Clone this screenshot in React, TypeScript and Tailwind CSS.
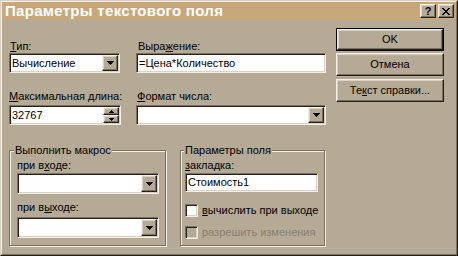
import React from "react";

const RAISED =
  "border border-t-[#f4f0e8] border-l-[#f4f0e8] border-r-[#24211c] border-b-[#24211c] shadow-[inset_-1px_-1px_0_#7b7160,inset_1px_1px_0_#d9d1c2]";
const SUNKEN =
  "border border-t-[#7b7160] border-l-[#7b7160] border-r-[#f4f0e8] border-b-[#f4f0e8] shadow-[inset_1px_1px_0_#24211c,inset_-1px_-1px_0_#d9d1c2]";
const GROUP =
  "relative border border-[#7b7160] shadow-[inset_1px_1px_0_#f4f0e8,1px_1px_0_#f4f0e8]";

function DownArrow() {
  return (
    <svg width="7" height="4" viewBox="0 0 7 4" shapeRendering="crispEdges">
      <rect x="0" y="0" width="7" height="1" fill="#000" />
      <rect x="1" y="1" width="5" height="1" fill="#000" />
      <rect x="2" y="2" width="3" height="1" fill="#000" />
      <rect x="3" y="3" width="1" height="1" fill="#000" />
    </svg>
  );
}

function SmallArrow({ up }: { up?: boolean }) {
  return (
    <svg width="5" height="3" viewBox="0 0 5 3" shapeRendering="crispEdges">
      {up ? (
        <>
          <rect x="2" y="0" width="1" height="1" fill="#000" />
          <rect x="1" y="1" width="3" height="1" fill="#000" />
          <rect x="0" y="2" width="5" height="1" fill="#000" />
        </>
      ) : (
        <>
          <rect x="0" y="0" width="5" height="1" fill="#000" />
          <rect x="1" y="1" width="3" height="1" fill="#000" />
          <rect x="2" y="2" width="1" height="1" fill="#000" />
        </>
      )}
    </svg>
  );
}

function Combo({ className, value }: { className: string; value?: string }) {
  return (
    <div className={`${SUNKEN} bg-white p-[1px] flex ${className}`}>
      <div className="flex-1 flex items-center pl-[1px] whitespace-nowrap overflow-hidden">
        {value}
      </div>
      <div className={`${RAISED} bg-[#b5aa96] w-[16px] flex items-center justify-center`}>
        <DownArrow />
      </div>
    </div>
  );
}

function TextBox({ className, value }: { className: string; value?: string }) {
  return (
    <div className={`${SUNKEN} bg-white flex items-center pl-[2px] whitespace-nowrap ${className}`}>
      {value}
    </div>
  );
}

function Button({
  children,
  isDefault,
  className,
}: {
  children: React.ReactNode;
  isDefault?: boolean;
  className?: string;
}) {
  if (isDefault) {
    return (
      <div className={`border border-black flex ${className ?? ""}`}>
        <div className={`${RAISED} flex-1 flex items-center justify-center`}>{children}</div>
      </div>
    );
  }
  return (
    <div className={`${RAISED} flex items-center justify-center whitespace-nowrap ${className ?? ""}`}>
      {children}
    </div>
  );
}

function CheckBox({ disabled }: { disabled?: boolean }) {
  return (
    <div
      className={`${SUNKEN} w-[13px] h-[13px] shrink-0 ${disabled ? "bg-[#b5aa96]" : "bg-white"}`}
    />
  );
}

export default function App() {
  return (
    <div className="w-[458px] h-[256px] overflow-hidden bg-[#b5aa96] border border-t-[#d9d1c2] border-l-[#d9d1c2] border-r-[#24211c] border-b-[#24211c] font-['Liberation_Sans',Arial,sans-serif] text-[11px] leading-[13px] text-black">
      <div className="h-full flex flex-col border border-t-[#f4f0e8] border-l-[#f4f0e8] border-r-[#7b7160] border-b-[#7b7160]">
        {/* Title bar */}
        <div className="h-[18px] shrink-0 bg-[#c8a77b] flex items-center pl-[3px] pr-[2px]">
          <span className="text-white font-bold text-[15px] leading-[18px] tracking-[0.3px] whitespace-nowrap">
            Параметры текстового поля
          </span>
          <div className="ml-auto flex gap-[2px]">
            <div className={`${RAISED} bg-[#b5aa96] w-[16px] h-[14px] flex items-center justify-center`}>
              <span className="font-bold text-[11px] leading-[11px]">?</span>
            </div>
            <div className={`${RAISED} bg-[#b5aa96] w-[16px] h-[14px] flex items-center justify-center`}>
              <svg width="8" height="7" viewBox="0 0 8 7" shapeRendering="crispEdges">
                <path
                  d="M0 0h2v1h1v1h2v-1h1v-1h2v1h-1v1h-1v1h-1v1h1v1h1v1h1v1h-2v-1h-1v-1h-2v1h-1v1h-2v-1h1v-1h1v-1h1v-1h-1v-1h-1v-1h-1z"
                  fill="#000"
                />
              </svg>
            </div>
          </div>
        </div>

        {/* Body */}
        <div className="flex-1 flex pl-[7px]">
          {/* Left column */}
          <div className="w-[317px] pt-[20px] flex flex-col">
            {/* Row 1 */}
            <div className="flex gap-[16px]">
              <div className="w-[111px] flex flex-col">
                <div className="pl-[1px] whitespace-nowrap">
                  <u>Т</u>ип:
                </div>
                <Combo className="w-[111px] h-[20px]" value="Вычисление" />
              </div>
              <div className="w-[190px] flex flex-col">
                <div className="pl-[2px] whitespace-nowrap">
                  Выра<u>ж</u>ение:
                </div>
                <TextBox className="w-[190px] h-[20px]" value="=Цена*Количество" />
              </div>
            </div>

            {/* Row 2 */}
            <div className="flex gap-[15px] mt-[17px]">
              <div className="w-[112px] flex flex-col">
                <div className="whitespace-nowrap">
                  <u>М</u>аксимальная длина:
                </div>
                <div className={`${SUNKEN} bg-white p-[1px] flex w-[112px] h-[20px] mt-[2px]`}>
                  <div className="flex-1 flex items-center pl-[1px]">32767</div>
                  <div className="w-[16px] flex flex-col">
                    <div className={`${RAISED} bg-[#b5aa96] flex-1 flex items-center justify-center`}>
                      <SmallArrow up />
                    </div>
                    <div className={`${RAISED} bg-[#b5aa96] flex-1 flex items-center justify-center`}>
                      <SmallArrow />
                    </div>
                  </div>
                </div>
              </div>
              <div className="w-[190px] flex flex-col">
                <div className="pl-[1px] whitespace-nowrap">
                  <u>Ф</u>ормат числа:
                </div>
                <Combo className="w-[190px] h-[20px] mt-[2px]" />
              </div>
            </div>

            {/* Row 3: group boxes */}
            <div className="flex gap-[14px] mt-[25px]">
              <div className={`${GROUP} w-[157px] h-[96px] pl-[7px] pt-[8px] flex flex-col`}>
                <div className="absolute left-[4px] top-[-7px] px-[1px] bg-[#b5aa96] whitespace-nowrap">
                  Выполнить макрос
                </div>
                <div className="whitespace-nowrap">
                  при в<u>х</u>оде:
                </div>
                <Combo className="w-[142px] h-[21px] mt-[1px]" />
                <div className="mt-[7px] whitespace-nowrap">
                  при в<u>ы</u>ходе:
                </div>
                <Combo className="w-[142px] h-[21px] mt-[3px]" />
              </div>

              <div className={`${GROUP} w-[145px] h-[96px] pl-[4px] pt-[8px] flex flex-col`}>
                <div className="absolute left-[3px] top-[-7px] px-[1px] bg-[#b5aa96] whitespace-nowrap">
                  Параметры поля
                </div>
                <div className="whitespace-nowrap">
                  <u>з</u>акладка:
                </div>
                <TextBox className="w-[133px] h-[19px] mt-[1px]" value="Стоимость1" />
                <div className="flex items-center gap-[4px] mt-[12px]">
                  <CheckBox />
                  <span className="whitespace-nowrap">
                    <u>в</u>ычислить при выходе
                  </span>
                </div>
                <div className="flex items-center gap-[4px] mt-[9px]">
                  <CheckBox disabled />
                  <span className="whitespace-nowrap text-[#8a806e]">
                    разрешить изменения
                  </span>
                </div>
              </div>
            </div>
          </div>

          {/* Right column */}
          <div className="w-[108px] ml-[10px] pt-[8px] flex flex-col">
            <Button isDefault className="h-[23px]">
              OK
            </Button>
            <Button className="h-[23px] mt-[2px]">Отмена</Button>
            <Button className="h-[23px] mt-[3px]">
              Те<u>к</u>ст справки...
            </Button>
          </div>
        </div>
      </div>
    </div>
  );
}
